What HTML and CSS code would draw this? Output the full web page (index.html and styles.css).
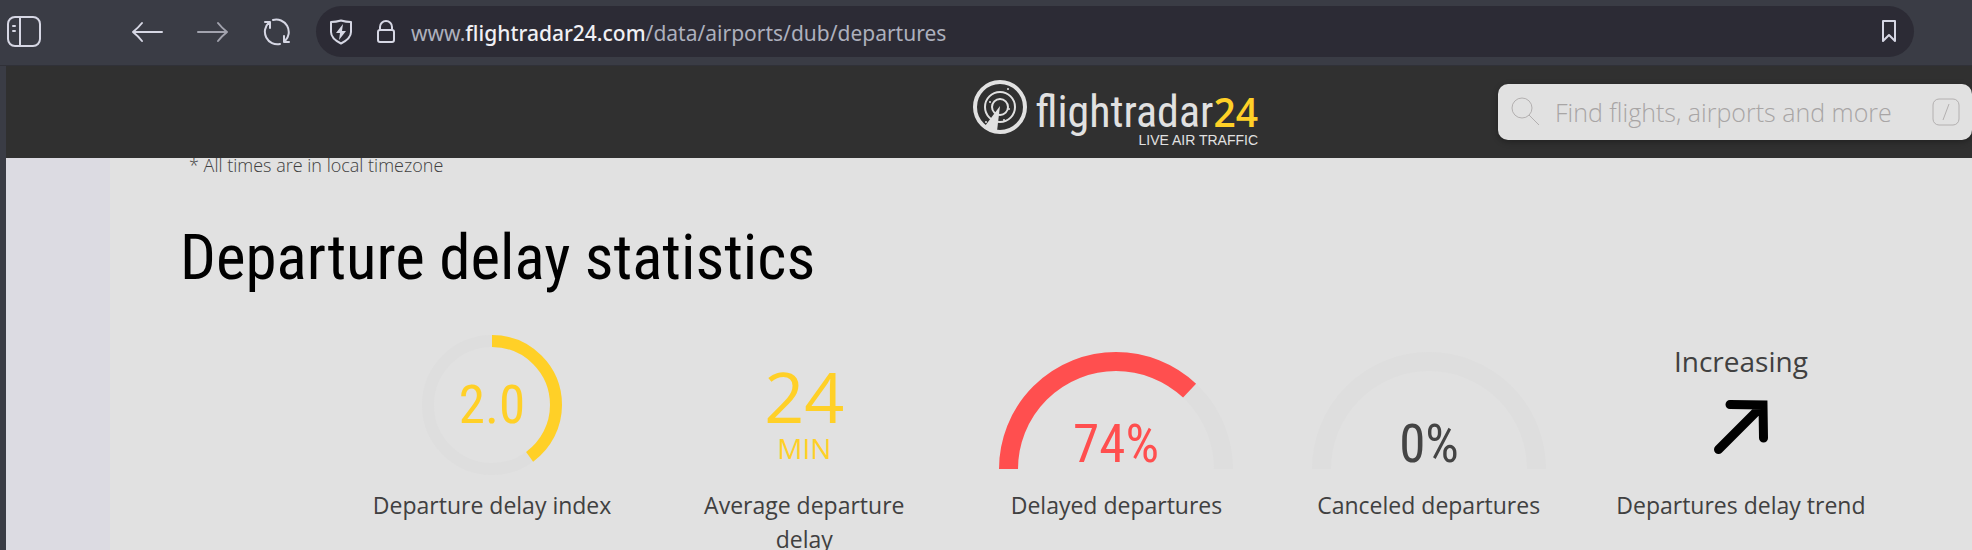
FILE: index.html
```
<!DOCTYPE html>
<html lang="en">
<head>
    <meta charset="UTF-8">
    <meta name="viewport" content="width=device-width, initial-scale=1.0">
    <title>Departures</title>
    <link rel="stylesheet" href="styles.css">
</head>
<body>

    <div class="toolbar">
        <button type="button" class="tool sidebar-btn" aria-label="Sidebar">
            <svg width="34" height="32" viewBox="0 0 34 32"><rect x="1" y="1" width="32" height="29" rx="7"/><path d="M13 1v29M6 10h2M6 15h2"/></svg>
        </button>
        <button type="button" class="tool" aria-label="Back">
            <svg width="32" height="22" viewBox="0 0 32 22"><path d="M31 11H2M11 2Q7 7 2 11Q7 15 11 20"/></svg>
        </button>
        <button type="button" class="tool forward" aria-label="Forward">
            <svg width="32" height="22" viewBox="0 0 32 22"><path d="M1 11h29M21 2Q25 7 30 11Q25 15 21 20"/></svg>
        </button>
        <button type="button" class="tool reload" aria-label="Reload">
            <svg width="28" height="28" viewBox="0 0 28 28"><path d="M10 2a12.500 12.500 0 0 1 12 21M17 26A12.500 12.500 0 0 1 6 4.500M2 4h5v6M26 24h-5v-6"/></svg>
        </button>
        <div class="address">
            <svg width="24" height="26" viewBox="0 0 24 26"><path d="M12 1.500Q17 3 22 3v10c0 6-5 9-10 11.500C7 22 2 19 2 13V3Q7 3 12 1.500z"/><path class="bolt" d="M14 5l-7 9h4l-1 7 7-9h-4z"/></svg>
            <svg class="lock" width="20" height="26" viewBox="0 0 20 26"><rect x="2" y="11" width="16" height="12" rx="2"/><path d="M4 11V8a6 6 0 0 1 12 0v3"/></svg>
            <div class="url" role="textbox" aria-label="Address" contenteditable="true" spellcheck="false">www.<b>flightradar24.com</b>/data/airports/dub/departures</div>
            <button type="button" class="tool" aria-label="Bookmark">
                <svg width="16" height="25" viewBox="0 0 16 25"><path d="M2 2h12v20l-6-6-6 6z"/></svg>
            </button>
        </div>
    </div>

    <div class="page">
        <header class="site-header">
            <a href="#" class="logo">
                <svg width="54" height="54" viewBox="0 0 54 54">
                    <circle cx="27" cy="27" r="25" stroke-width="4"/>
                    <circle cx="27" cy="27" r="15" stroke-width="2"/>
                    <circle cx="27" cy="27" r="8" stroke-width="2"/>
                    <path class="beam" d="M27 26L12 46q5 6 12 5z"/>
                    <g class="dots"><circle cx="35" cy="9" r="1"/><circle cx="17" cy="22" r="1"/><circle cx="36" cy="29" r="1"/><circle cx="31" cy="40" r="1"/><circle cx="13" cy="42" r="1"/></g>
                </svg>
                <span class="logo-text">
                    <span class="logo-name">flightradar<b>24</b></span>
                    <span class="tagline">LIVE AIR TRAFFIC</span>
                </span>
            </a>
            <label class="search">
                <svg width="30" height="30" viewBox="0 0 30 30"><circle cx="11" cy="11" r="10"/><path d="M18 18l10 10"/></svg>
                <input type="text" aria-label="Search" placeholder="Find flights, airports and more">
                <svg width="28" height="28" viewBox="0 0 28 28"><rect x="1" y="1" width="26" height="26" rx="6"/><path d="M17 6l-6 16"/></svg>
            </label>
        </header>

        <main class="content">
            <p class="note">* All times are in local timezone</p>
            <h1>Departure delay statistics</h1>

            <div class="stats">
                <div class="stat">
                    <div class="figure">
                        <svg width="140" height="140" viewBox="0 0 140 140">
                            <circle class="track" cx="70" cy="70" r="64" stroke-width="12"/>
                            <circle class="bar yellow" cx="70" cy="70" r="64" stroke-width="12" pathLength="100" stroke-dasharray="40 60" transform="rotate(-90 70 70)"/>
                            <text class="yellow-text" x="70" y="88">2.0</text>
                        </svg>
                    </div>
                    <p>Departure delay index</p>
                </div>
                <div class="stat">
                    <div class="figure average">
                        <span class="minutes">24</span>
                        <span class="unit">MIN</span>
                    </div>
                    <p>Average departure delay</p>
                </div>
                <div class="stat">
                    <div class="figure half">
                        <svg width="234" height="117" viewBox="0 0 234 117">
                            <path class="track" d="M9.500 117a107.500 107.500 0 0 1 215 0" stroke-width="19"/>
                            <path class="bar red" d="M9.500 117a107.500 107.500 0 0 1 215 0" stroke-width="19" pathLength="100" stroke-dasharray="74 100"/>
                            <text class="red-text" x="117" y="110">74%</text>
                        </svg>
                    </div>
                    <p>Delayed departures</p>
                </div>
                <div class="stat">
                    <div class="figure half">
                        <svg width="234" height="117" viewBox="0 0 234 117">
                            <path class="track" d="M9.500 117a107.500 107.500 0 0 1 215 0" stroke-width="19"/>
                            <text x="117" y="110">0%</text>
                        </svg>
                    </div>
                    <p>Canceled departures</p>
                </div>
                <div class="stat">
                    <div class="figure trend">
                        <span>Increasing</span>
                        <svg width="54" height="54" viewBox="0 0 54 54"><path d="M4.500 49.500L48 6M16 4.500L49 5L49.500 38"/></svg>
                    </div>
                    <p>Departures delay trend</p>
                </div>
            </div>
        </main>
    </div>

</body>
</html>
```
FILE: styles.css
```
*{
    margin: 0;
    padding: 0;
    box-sizing: border-box;
}
body{
    min-height: 100vh;
    background-color: #3a3c45;
    font-family: "Open Sans", "Noto Sans", sans-serif;
    color: #404040;
    overflow: hidden;
}
svg{
    display: block;
    flex: none;
    fill: none;
}
/* browser toolbar */
.toolbar{
    display: flex;
    align-items: center;
    height: 66px;
    padding: 6px 58px 8px 7px;
    border-bottom: 1px solid #303138;
}
.tool{
    background: none;
    border: none;
    margin-right: 34px;
}
.toolbar svg{
    stroke: #d6d7e4;
    stroke-width: 2;
    stroke-linecap: round;
    stroke-linejoin: round;
}
.sidebar-btn{
    margin-right: 90px;
}
.toolbar .forward svg{
    stroke: #a2a3ae;
}
.reload{
    margin-right: 25px;
}
.address{
    flex: 1;
    height: 51px;
    display: flex;
    align-items: center;
    padding: 0 17px 0 13px;
    border-radius: 26px;
    background-color: #2c2b35;
}
.address .tool{
    margin-right: 0;
}
.toolbar .bolt{
    fill: #d6d7e4;
    stroke: none;
}
.lock{
    margin: 0 15px 0 23px;
}
.url{
    flex: 1;
    padding-top: 2px;
    font-family: "Noto Sans", "Open Sans", sans-serif;
    font-size: 21px;
    line-height: 30px;
    color: #adb0bd;
    outline: none;
}
.url b{
    font-weight: 500;
    color: #f0f0f4;
}
/* site */
.page{
    margin-left: 6px;
    background-color: #dcdbe2;
}
.site-header{
    height: 92px;
    display: flex;
    justify-content: flex-end;
    align-items: center;
    gap: 240px;
    background-color: #303030;
}
.logo{
    align-self: flex-start;
    display: flex;
    gap: 8px;
    margin-top: 14px;
    color: #e1e1e1;
    text-decoration: none;
}
.logo svg{
    stroke: #e1e1e1;
}
.logo .beam,
.logo .dots{
    fill: #e1e1e1;
    stroke: none;
}
.logo-text{
    display: flex;
    flex-direction: column;
    align-items: flex-end;
    padding-top: 12px;
}
.logo-name{
    font-family: "Roboto Condensed", "Liberation Sans Narrow", Roboto, sans-serif;
    font-size: 44px;
    line-height: 40px;
    font-weight: 400;
}
.logo-name b{
    font-family: "Open Sans", sans-serif;
    font-size: 39px;
    font-weight: 600;
    color: #ffd027;
}
.tagline{
    font-family: "Liberation Sans", Arial, sans-serif;
    font-size: 14px;
    line-height: 16px;
}
.search{
    width: 474px;
    height: 56px;
    display: flex;
    align-items: center;
    gap: 14px;
    padding: 0 12px 0 13px;
    border-radius: 10px;
    background-color: #e1e1e1;
    box-shadow: 0 2px 6px rgba(0,0,0,.3);
}
.search svg{
    stroke: #b3b0b0;
}
.search input{
    flex: 1;
    min-width: 0;
    border: none;
    outline: none;
    background: transparent;
    font-family: inherit;
    font-size: 25px;
    font-weight: 300;
    color: #404040;
}
.search input::placeholder{
    color: #a8a5a5;
}
.content{
    margin-left: 104px;
    padding: 0 75px 40px 70px;
    min-height: 392px;
    background-color: #e1e1e1;
}
.note{
    padding-left: 9px;
    font-size: 18px;
    line-height: 14px;
    font-weight: 300;
}
h1{
    margin-top: 48px;
    font-family: "Roboto Condensed", "Liberation Sans Narrow", Roboto, sans-serif;
    font-size: 63px;
    line-height: 76px;
    font-weight: 400;
    color: #000;
}
.stats{
    display: grid;
    grid-template-columns: repeat(5, 1fr);
    margin: 39px 0 0 156px;
}
.stat{
    padding: 0 26px;
    text-align: center;
    font-size: 23px;
    line-height: 34px;
}
.figure{
    height: 140px;
    margin-bottom: 13px;
    display: flex;
    flex-direction: column;
    align-items: center;
    justify-content: flex-end;
}
.figure text{
    font-family: "Roboto Condensed", "Liberation Sans Narrow", Roboto, sans-serif;
    font-size: 53px;
    text-anchor: middle;
    fill: #444;
}
.track{
    stroke: #dedede;
}
.yellow{
    stroke: #ffd027;
}
.red{
    stroke: #ff4f4f;
}
.figure .yellow-text{
    fill: #ffd027;
}
.figure .red-text{
    fill: #ff4f4f;
}
.half{
    padding-bottom: 6px;
}
.average{
    padding-bottom: 13px;
    color: #ffd027;
}
.minutes{
    font-size: 70px;
    line-height: 76px;
}
.unit{
    font-size: 28px;
    line-height: 28px;
}
.trend{
    gap: 25px;
    padding-bottom: 21px;
}
.trend span{
    font-size: 28px;
    line-height: 28px;
}
.trend path{
    stroke: #000;
    stroke-width: 9;
    stroke-linecap: round;
}
```
